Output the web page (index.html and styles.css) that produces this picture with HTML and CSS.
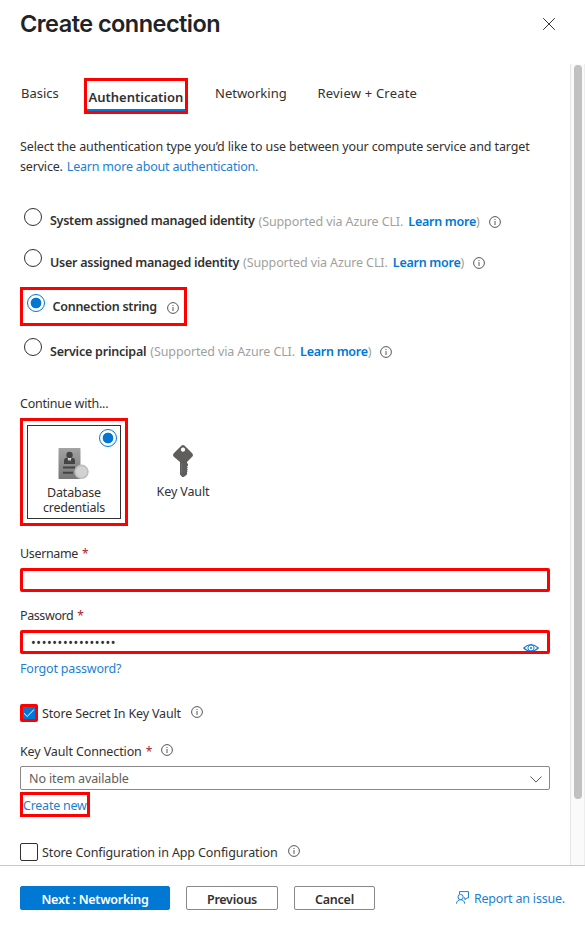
FILE: index.html
```html
<!DOCTYPE html>
<html lang="en">
<head>
<meta charset="utf-8">
<title>Create connection</title>
<link rel="stylesheet" href="styles.css">
</head>
<body>
<svg class="defs" aria-hidden="true">
  <symbol id="info" viewBox="0 0 12 12"><circle cx="6" cy="6" r="5.4" fill="none" stroke="#444" stroke-width=".9"/><path d="M6 5v4M6 3v1" stroke="#444" stroke-width=".9"/></symbol>
</svg>
<div class="panel">
  <header class="header">
    <h1>Create connection</h1>
    <svg class="close" viewBox="0 0 12 12"><path d="M.2.2l11.6 11.6M11.8.2L.2 11.8" stroke="#333" stroke-width="1"/></svg>
  </header>
  <div class="viewport">
    <main class="content">
      <nav class="tabs">
        <a class="tab basics">Basics</a>
        <a class="tab active">Authentication</a>
        <a class="tab networking">Networking</a>
        <a class="tab review">Review + Create</a>
      </nav>
      <p class="intro"><span class="line-one">Select the authentication type you’d like to use between your compute service and target</span><br><span class="line-two">service. <a class="link">Learn more about authentication.</a></span></p>
      <div class="options">
        <div class="option system"><i class="radio"></i><b>System assigned managed identity</b><span class="note">(Supported via Azure CLI. <a>Learn more</a>)</span><svg class="info"><use href="#info"/></svg></div>
        <div class="option user"><i class="radio"></i><b>User assigned managed identity</b><span class="note">(Supported via Azure CLI. <a>Learn more</a>)</span><svg class="info"><use href="#info"/></svg></div>
        <div class="option selected"><i class="radio on"></i><b>Connection string</b><svg class="info"><use href="#info"/></svg></div>
        <div class="option service"><i class="radio"></i><b>Service principal</b><span class="note">(Supported via Azure CLI. <a>Learn more</a>)</span><svg class="info"><use href="#info"/></svg></div>
      </div>
      <div class="label continue">Continue with...</div>
      <div class="cards">
        <div class="highlight">
          <div class="card">
            <i class="radio on corner"></i>
            <svg class="cred" viewBox="0 0 31 32">
              <defs><linearGradient id="g" x1="0" y1="0" x2="0" y2="1"><stop offset="0" stop-color="#a3a3a3"/><stop offset="1" stop-color="#777"/></linearGradient></defs>
              <rect x=".5" width="22" height="31" rx=".8" fill="url(#g)"/>
              <path d="M6 16v-3.500q0-2.500 2.500-2.800h5.500q3 .3 3 2.800V16z" fill="#444"/>
              <path d="M9.500 9.700h4L11.500 15z" fill="#eee"/><path d="M11.500 11l.9 4h-1.800z" fill="#444"/>
              <circle cx="11.500" cy="7" r="3.200" fill="#444"/>
              <path d="M5 19.500h12M5 24.800h10" stroke="#444" stroke-width="2"/>
              <circle cx="23.500" cy="23.800" r="7.200" fill="#bebebe"/><circle cx="23.500" cy="23.800" r="5.600" fill="#d2d2d2"/>
            </svg>
            <span>Database<br>credentials</span>
          </div>
        </div>
        <div class="vault">
          <svg class="key" viewBox="0 0 20 32"><path fill="#5f5e5c" fill-rule="evenodd" d="M8.300.7q1.700-1.400 3.400 0l7.500 7.500q1.500 1.800 0 3.600L14 17v1l1 1v1.500l-1 1 .8 1-.8 1 .8 1-.8 1 .5 1-.5 1v2L10.800 32H9.200L7 29.500V17L.8 11.800Q-.7 10 .8 8.200zM10 2.500a2.100 2.100 0 1 0 .01 0z"/><path d="M8.800 18.500v9" stroke="#777" stroke-width=".8"/></svg>
          <span>Key Vault</span>
        </div>
      </div>
      <div class="label username">Username <em>*</em></div>
      <div class="input"></div>
      <div class="label password">Password <em>*</em></div>
      <div class="input secret"><span>••••••••••••••••</span>
        <svg class="eye" viewBox="0 0 16 8"><path d="M.7 4Q8-2.700 15.300 4Q8 10.700.7 4z" fill="none" stroke="#1b7fd4" stroke-width="1.200"/><circle cx="8" cy="4" r="3.100" fill="none" stroke="#1b7fd4"/><circle cx="8" cy="4" r="1.100" fill="#1b7fd4"/></svg>
      </div>
      <a class="link forgot">Forgot password?</a>
      <div class="check secret-check"><i class="box checked"><svg viewBox="0 0 12 12"><path d="M1 6.300l3.300 3.200L11 2.500" fill="none" stroke="#fff" stroke-width="1"/></svg></i><span>Store Secret In Key Vault</span><svg class="info"><use href="#info"/></svg></div>
      <div class="label connection"><span>Key Vault Connection <em>*</em></span><svg class="info"><use href="#info"/></svg></div>
      <div class="select"><span>No item available</span><svg viewBox="0 0 12 7"><path d="M.4.5L6 6.100 11.600.5" fill="none" stroke="#555"/></svg></div>
      <a class="create">Create new</a>
      <div class="check config-check"><i class="box"></i><span>Store Configuration in App Configuration</span><svg class="info"><use href="#info"/></svg></div>
    </main>
    <div class="scrollbar"><div class="thumb"></div></div>
  </div>
  <footer class="footer">
    <button class="primary">Next : Networking</button>
    <button class="previous">Previous</button>
    <button class="cancel">Cancel</button>
    <a class="report"><svg viewBox="0 0 13 13"><path d="M3.500 3V.6h9v6.300h-1.700L9 8.800V6.900H8M.5 12.700c.2-5.300 8-5.300 8.200 0" fill="none" stroke="#1b7fd4"/><circle cx="4.600" cy="6" r="2.600" fill="none" stroke="#1b7fd4"/></svg><span>Report an issue.</span></a>
  </footer>
</div>
</body>
</html>
```
FILE: styles.css
```css
* { box-sizing: border-box; }
body {
  margin: 0;
  background: #fff;
  color: #323130;
  font: 12.5px/20px "Noto Sans", "Open Sans", sans-serif;
  letter-spacing: -.12px;
}
.defs { position: absolute; width: 0; height: 0; }
svg { display: block; flex: none; }
b, button, .note a, .tab.active { font-family: "Noto Sans", "Open Sans", sans-serif; font-weight: 600; letter-spacing: -.26px; }
em { margin-left: 1px; font-style: normal; font-size: 12px; line-height: 1; color: #a4262c; }
.panel { display: flex; flex-direction: column; width: 585px; height: 930px; overflow: hidden; }
.header { display: flex; justify-content: space-between; height: 64px; padding: 8px 30px 0 20px; }
h1 { margin: 0; color: #212327; font: 600 23.5px/32px Inter, sans-serif; letter-spacing: -.53px; white-space: nowrap; }
.close { width: 12px; height: 12px; margin-top: 10px; }
.viewport { display: flex; height: 801px; overflow: hidden; }
.content { display: flex; flex-direction: column; align-items: flex-start; width: 570px; padding: 14px 20px 0; white-space: nowrap; }
.scrollbar { width: 15px; padding: 1px 3px 0; background: #fafafa; border-left: 1px solid #e6e6e6; border-right: 1px solid #ededed; }
.thumb { width: 8px; height: 734px; border-radius: 4px; background: #c1c1c1; }
.link, .report { color: #1b7fd4; }

.tabs { display: flex; height: 36px; padding-left: 1px; font-size: 13px; letter-spacing: 0; }
.tab { padding-top: 5px; }
.basics { width: 63px; }
.tab.active { width: 104px; height: 36px; padding: 6px 0 0 1.5px; border: 3px solid #f00; box-shadow: inset 0 -2px #0078d4; letter-spacing: 0; }
.networking { width: 129px; padding-left: 27px; }
.review { padding-left: .5px; letter-spacing: .2px; }
.intro { height: 40px; margin: 23px 0 0; }
.line-two { letter-spacing: -.18px; }
.line-two .link { margin-left: 1px; letter-spacing: -.2px; }

.options { display: flex; flex-direction: column; align-items: flex-start; margin-top: 31px; }
.option { display: flex; height: 40px; padding-left: 4px; }
.radio { display: block; flex: none; width: 18px; height: 18px; border: 1px solid #323130; border-radius: 50%; }
.radio.on { border-color: #0078d4; background: radial-gradient(circle, #0078d4 5px, #fff 5.7px); }
.option b { margin: 3px 0 0 8px; }
.option .note { margin: 4px 0 0 4px; color: #a19f9d; }
.note a { margin-left: 2px; color: #0078d4; }
.info { width: 12px; height: 12px; }
.option .info { margin: 8px 0 0 9px; }
.system { height: 41px; }
.user { height: 38px; }
.user b { margin-top: 4px; }
.option.selected { width: 167px; height: 39px; padding: 4px; border: 3px solid #f00; }
.selected .radio { margin-left: -.5px; }
.option.selected .info { margin-left: 10.5px; }
.service { margin-top: 12px; height: 38px; }
.service b { margin-top: 4px; letter-spacing: -.22px; }

.label { height: 20px; }
.continue { margin-top: 18px; letter-spacing: -.23px; }
.cards { display: flex; margin-top: 4px; line-height: 15px; text-align: center; }
.highlight { width: 108px; height: 108px; padding: 4px; border: 3px solid #f00; }
.card { position: relative; width: 94px; height: 94px; padding-top: 22px; border: 1px solid #323130; letter-spacing: -.2px; }
.corner { position: absolute; top: 3px; right: 3px; }
.cred { width: 31px; height: 32px; margin: 0 0 5px 30px; }
.vault { display: flex; flex-direction: column; align-items: center; width: 110px; padding-top: 27px; }
.key { width: 20px; height: 32px; margin-bottom: 7px; }
.username { margin-top: 18px; letter-spacing: -.35px; }
.input { display: flex; justify-content: space-between; width: 530px; height: 24px; margin-top: 4px; border: 3px solid #f00; border-radius: 2px; }
.password { margin-top: 14px; letter-spacing: -.4px; }
.secret { padding-left: 8px; overflow: hidden; }
.secret span { line-height: 19px; letter-spacing: .62px; }
.eye { width: 16px; height: 8px; margin: 11px 8px 0 0; }
.forgot { margin-top: 5px; letter-spacing: -.18px; }
.check { display: flex; height: 20px; }
.check span { margin-left: 4px; }
.box { width: 18px; height: 18px; border: 1px solid #323130; border-radius: 2px; }
.checked { border: 3px solid #f00; background: #0078d4; }
.check .info { margin: 2px 0 0 10px; }
.secret-check { margin-top: 25px; letter-spacing: -.16px; }
.connection { display: flex; margin-top: 18px; }
.connection .info { margin: 2px 0 0 9px; }
.select { display: flex; justify-content: space-between; width: 530px; height: 24px; margin-top: 4px; padding: 2px 7px 0 8px; border: 1px solid #8a8886; border-radius: 2px; color: #605e5c; }
.select svg { width: 12px; height: 7px; margin-top: 7px; }
.create { width: 70px; height: 25px; margin-top: 2px; padding-top: 1px; border: 3px solid #f00; color: #1b7fd4; letter-spacing: -.25px; }
.config-check { margin-top: 26px; }

.footer { display: flex; align-items: flex-start; height: 65px; padding: 20px 20px 0; border-top: 1px solid #c8c8c8; white-space: nowrap; }
button { height: 24px; margin: 0 16px 0 0; padding: 3px 0 0; border: 1px solid #8a8886; border-radius: 2px; background: #fff; color: #323130; font-size: 12.5px; line-height: 20px; }
.primary { width: 150px; border-color: #0078d4; background: #0078d4; color: #fff; }
.previous { width: 92px; }
.cancel { width: 81px; }
.report { display: flex; gap: 5px; margin: 3px 0 0 auto; letter-spacing: -.2px; }
.report svg { width: 13px; height: 13px; margin-top: 2px; }
```
